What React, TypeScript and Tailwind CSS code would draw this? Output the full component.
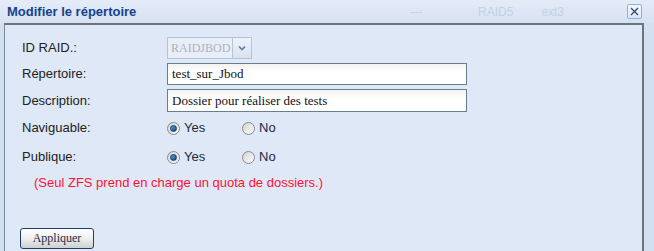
import React from "react";

function Radio({ checked }: { checked?: boolean }) {
  return (
    <span className="relative inline-flex h-[13px] w-[13px] items-center justify-center rounded-full border border-[#8a8a8a] bg-gradient-to-br from-[#d4d4d4] to-[#fbfbfb]">
      {checked && (
        <span className="h-[7px] w-[7px] rounded-full border border-[#0e3a66] bg-gradient-to-br from-[#5ea6dc] to-[#0c4a86]" />
      )}
    </span>
  );
}

function RadioPair({ yes }: { yes: boolean }) {
  return (
    <div className="flex items-center text-[13px] text-[#1a2a44]">
      <label className="flex w-[75px] items-center gap-[4px]">
        <Radio checked={yes} />
        <span>Yes</span>
      </label>
      <label className="flex items-center gap-[4px]">
        <Radio checked={!yes} />
        <span>No</span>
      </label>
    </div>
  );
}

export default function App() {
  const sans = { fontFamily: '"Liberation Sans", Arial, sans-serif' };
  const serif = { fontFamily: '"Liberation Serif", "Times New Roman", serif' };

  return (
    <div className="flex h-[251px] w-[654px] flex-col overflow-hidden bg-[#d3e0f0]" style={sans}>
      {/* title bar */}
      <div className="flex h-[23px] items-center bg-gradient-to-b from-[#e4ecf7] to-[#d6e2f2] pl-[7px] pr-[12px]">
        <span className="w-[127px] whitespace-nowrap text-[13px] font-bold text-[#15428b]">Modifier le répertoire</span>
        <span className="ml-[276px] text-[12px] text-[#c3d0e3]">---</span>
        <span className="ml-[56px] text-[12px] text-[#c3d0e3]">RAID5</span>
        <span className="ml-[28px] text-[12px] text-[#c3d0e3]">ext3</span>
        <span className="ml-auto flex h-[15px] w-[15px] items-center justify-center rounded-[2px] border border-[#8fb0dc] bg-gradient-to-b from-[#f4f8fd] to-[#dce7f6]">
          <svg width="9" height="9" viewBox="0 0 9 9">
            <path d="M1 1 L8 8 M8 1 L1 8" stroke="#2a4a86" strokeWidth="1.3" />
          </svg>
        </span>
      </div>

      {/* body */}
      <div className="flex flex-1 pl-[4px] pr-[10px]">
        <div className="flex flex-1 flex-col border-l border-r-2 border-t-2 border-l-[#7d8896] border-r-[#6b737c] border-t-[#6b737c] bg-[#dfe8f6] pl-[17px] pt-[12px]">
          <div className="flex h-[22px] items-center">
            <span className="w-[145px] text-[13px] text-[#222]">ID RAID.:</span>
            <div className="flex h-[22px] border border-[#b5c3d4] bg-[#e8eef7]">
              <span className="flex w-[64px] items-center whitespace-nowrap pl-[3px] text-[12px] text-[#a8b2bf]" style={serif}>
                RAIDJBOD
              </span>
              <span className="flex w-[19px] items-center justify-center border-l border-[#b5c3d4] bg-gradient-to-b from-[#eef3fa] to-[#d8e2ef]">
                <svg width="8" height="6" viewBox="0 0 8 6">
                  <path d="M1 1.5 L4 4.5 L7 1.5" fill="none" stroke="#5a7bb0" strokeWidth="1.6" />
                </svg>
              </span>
            </div>
          </div>

          <div className="mt-[4px] flex h-[22px] items-center">
            <span className="w-[145px] text-[13px] text-[#222]">Répertoire:</span>
            <div className="flex h-[22px] w-[300px] items-center border border-[#667f8f] bg-gradient-to-b from-[#f2f2f2] to-white to-40% pl-[4px] text-[13px] text-[#111]" style={serif}>
              test_sur_Jbod
            </div>
          </div>

          <div className="mt-[4px] flex h-[23px] items-center">
            <span className="w-[145px] text-[13px] text-[#222]">Description:</span>
            <div className="flex h-[23px] w-[300px] items-center border border-[#667f8f] bg-gradient-to-b from-[#f2f2f2] to-white to-40% pl-[4px] text-[13px] text-[#111]" style={serif}>
              Dossier pour réaliser des tests
            </div>
          </div>

          <div className="mt-[6px] flex h-[20px] items-center">
            <span className="w-[145px] text-[13px] text-[#222]">Naviguable:</span>
            <RadioPair yes />
          </div>

          <div className="mt-[9px] flex h-[20px] items-center">
            <span className="w-[145px] text-[13px] text-[#222]">Publique:</span>
            <RadioPair yes />
          </div>

          <div className="mt-[6px] flex h-[20px] items-center pl-[12px] text-[13px] text-[#ff1133]">
            (Seul ZFS prend en charge un quota de dossiers.)
          </div>

          <div className="mt-[32px]">
            <button
              className="-ml-[2px] h-[21px] w-[74px] rounded-[3px] border border-[#1e3f6e] bg-gradient-to-b from-[#ffffff] via-[#eeeeee] to-[#cfcfcf] text-[12px] text-[#1a2a44]"
              style={serif}
            >
              Appliquer
            </button>
          </div>
        </div>
      </div>
    </div>
  );
}
